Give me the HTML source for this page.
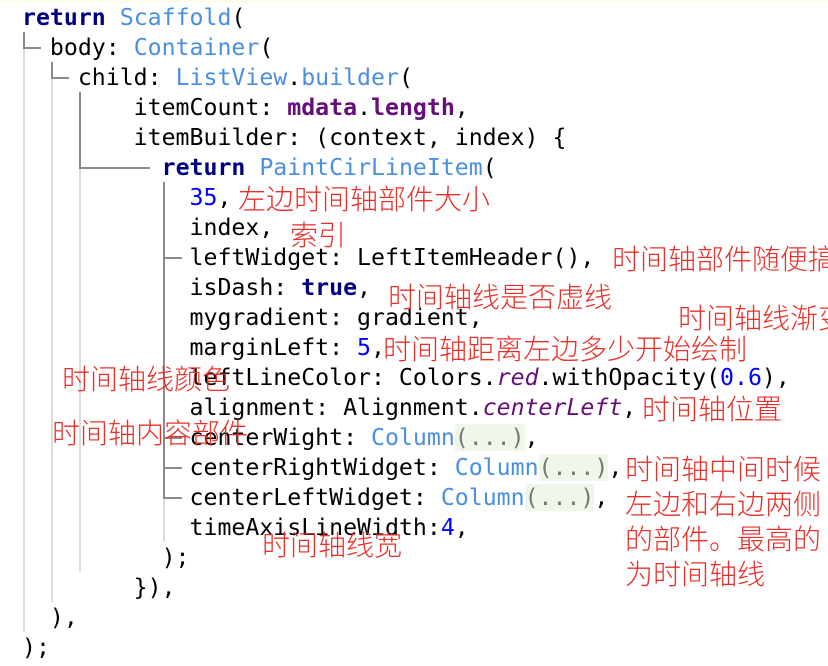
<!DOCTYPE html>
<html><head><meta charset="utf-8"><style>
html,body{margin:0;padding:0;background:#fff;width:828px;height:666px;overflow:hidden;position:relative}
.top{position:absolute;left:0;top:0;width:828px;height:3px;background:#fdfbe9}
.l{position:absolute;left:22px;height:30px;line-height:30px;font-family:"DejaVu Sans Mono","Liberation Mono",monospace;font-size:23.2px;color:#000;white-space:pre}
.k{color:#000080;font-weight:bold}
.c{color:#4a8fe0}
.p{color:#660e7a;font-weight:bold}
.n{color:#0000ff}
.i{color:#660e7a;font-style:italic}
.f{background:#eef7ea;color:#777}
.a{position:absolute;font-family:"Noto Sans CJK SC","WenQuanYi Zen Hei",sans-serif;font-size:28px;font-weight:300;color:#e8302a;line-height:30px;white-space:nowrap}
.v{position:absolute;width:2px}
.h{position:absolute;height:2px}
.d{background:#8a8a8a}
.g{background:#dcdcdc}
</style></head><body>
<div class="top"></div>
<div class="v d" style="left:23px;top:32px;height:17px"></div><div class="h d" style="left:23px;top:47px;width:18px"></div>
<div class="v g" style="left:23px;top:49px;height:583px"></div>
<div class="v d" style="left:51px;top:62px;height:17px"></div><div class="h d" style="left:51px;top:77px;width:18px"></div>
<div class="v g" style="left:51px;top:79px;height:523px"></div>
<div class="v d" style="left:79px;top:92px;height:77px"></div><div class="h d" style="left:79px;top:167px;width:71px"></div>
<div class="v g" style="left:79px;top:169px;height:403px"></div>
<div class="v d" style="left:163px;top:182px;height:317px"></div>
<div class="h d" style="left:163px;top:257px;width:19px"></div>
<div class="h d" style="left:163px;top:437px;width:19px"></div>
<div class="h d" style="left:163px;top:467px;width:19px"></div>
<div class="h d" style="left:163px;top:497px;width:19px"></div>
<div class="v g" style="left:163px;top:499px;height:43px"></div>
<div class="l" style="top:3px"><span class="k">return</span> <span class="c">Scaffold</span>(</div>
<div class="l" style="top:33px">  body: <span class="c">Container</span>(</div>
<div class="l" style="top:63px">    child: <span class="c">ListView</span>.<span class="c">builder</span>(</div>
<div class="l" style="top:93px">        itemCount: <span class="p">mdata</span>.<span class="p">length</span>,</div>
<div class="l" style="top:123px">        itemBuilder: (context, index) {</div>
<div class="l" style="top:153px">          <span class="k">return</span> <span class="c">PaintCirLineItem</span>(</div>
<div class="l" style="top:183px">            <span class="n">35</span>,</div>
<div class="l" style="top:213px">            index,</div>
<div class="l" style="top:243px">            leftWidget: LeftItemHeader(),</div>
<div class="l" style="top:273px">            isDash: <span class="k">true</span>,</div>
<div class="l" style="top:303px">            mygradient: gradient,</div>
<div class="l" style="top:333px">            marginLeft: <span class="n">5</span>,</div>
<div class="l" style="top:363px">            leftLineColor: Colors.<span class="i">red</span>.withOpacity(<span class="n">0.6</span>),</div>
<div class="l" style="top:393px">            alignment: Alignment.<span class="i">centerLeft</span>,</div>
<div class="l" style="top:423px">            centerWight: <span class="c">Column</span><span class="f">(...)</span>,</div>
<div class="l" style="top:453px">            centerRightWidget: <span class="c">Column</span><span class="f">(...)</span>,</div>
<div class="l" style="top:483px">            centerLeftWidget: <span class="c">Column</span><span class="f">(...)</span>,</div>
<div class="l" style="top:513px">            timeAxisLineWidth:<span class="n">4</span>,</div>
<div class="l" style="top:543px">          );</div>
<div class="l" style="top:573px">        }),</div>
<div class="l" style="top:603px">  ),</div>
<div class="l" style="top:633px">);</div>
<div class="a" style="left:238px;top:183px">左边时间轴部件大小</div>
<div class="a" style="left:290px;top:219px">索引</div>
<div class="a" style="left:612px;top:243px">时间轴部件随便搞</div>
<div class="a" style="left:388px;top:281px">时间轴线是否虚线</div>
<div class="a" style="left:678px;top:302px">时间轴线渐变</div>
<div class="a" style="left:383px;top:333px">时间轴距离左边多少开始绘制</div>
<div class="a" style="left:62px;top:363px">时间轴线颜色</div>
<div class="a" style="left:642px;top:393px">时间轴位置</div>
<div class="a" style="left:52px;top:417px">时间轴内容部件</div>
<div class="a" style="left:625px;top:453px">时间轴中间时候</div>
<div class="a" style="left:625px;top:488px">左边和右边两侧</div>
<div class="a" style="left:625px;top:523px">的部件。最高的</div>
<div class="a" style="left:625px;top:558px">为时间轴线</div>
<div class="a" style="left:262px;top:529px">时间轴线宽</div>
</body></html>
